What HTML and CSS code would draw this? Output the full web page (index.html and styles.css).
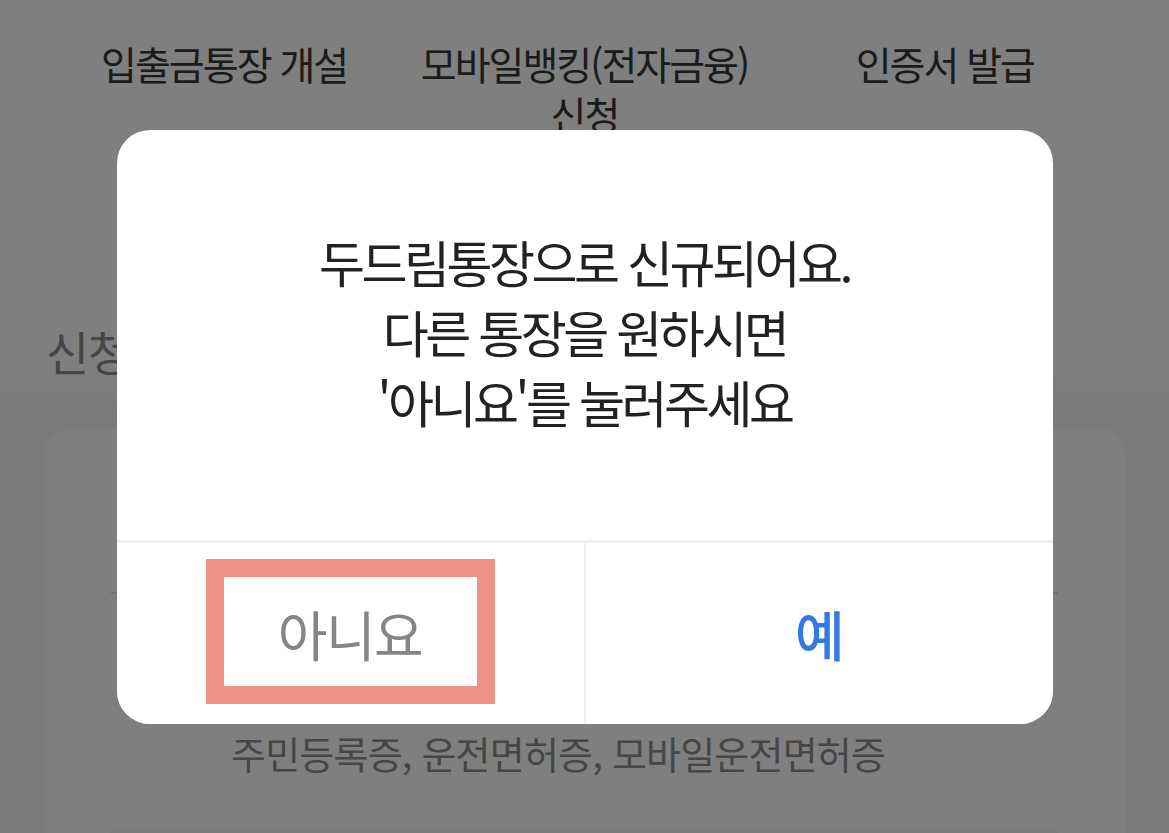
FILE: index.html
```html
<!DOCTYPE html>
<html lang="ko">
<head>
<meta charset="utf-8">
<title>신청</title>
<link rel="stylesheet" href="styles.css">
</head>
<body>
<div class="page">
  <nav class="steps">
    <div class="step">입출금통장 개설</div>
    <div class="step"><span class="step-line">모바일뱅킹(전자금융)</span><span class="step-line">신청</span></div>
    <div class="step">인증서 발급</div>
  </nav>
  <h2 class="section-title">신청정보 확인</h2>
  <div class="content">
    <section class="card">
      <div class="card-head">신분증 확인</div>
      <div class="card-body">
        <p class="card-note">주민등록증, 운전면허증, 모바일운전면허증</p>
        <div class="card-field"></div>
      </div>
    </section>
  </div>
</div>

<div class="overlay">
  <div class="dialog">
    <div class="dialog-msg">
      <p>두드림통장으로 신규되어요.</p>
      <p>다른 통장을 원하시면</p>
      <p>'아니요'를 눌러주세요</p>
    </div>
    <div class="dialog-actions">
      <button class="btn btn-no">아니요<span class="highlight"></span></button>
      <button class="btn btn-yes">예</button>
    </div>
  </div>
</div>
</body>
</html>
```

FILE: styles.css
```css
* { box-sizing: border-box; }
html, body {
  margin: 0;
  padding: 0;
  background: #ffffff;
  font-family: "Noto Sans CJK KR", "Noto Sans", sans-serif;
}
p { margin: 0; }

.page {
  width: 1169px;
  height: 833px;
  overflow: hidden;
  background: #ffffff;
}

.steps {
  display: grid;
  grid-template-columns: repeat(3, 1fr);
  padding: 38px 44px 0;
}
.step {
  text-align: center;
  font-size: 39px;
  line-height: 50px;
  letter-spacing: -2px;
  color: #363636;
}
.step-line {
  display: block;
  height: 50px;
}

.section-title {
  margin: 185px 0 0 46px;
  font-size: 47px;
  line-height: 56px;
  font-weight: 400;
  letter-spacing: -1.5px;
  color: #8c8c8c;
}

.content {
  background: linear-gradient(#ffffff 0, #f6f6f6 30px);
  padding: 49px 44px 0;
  height: 460px;
}
.card {
  height: 480px;
  background: #ffffff;
  border-radius: 28px;
}
.card-head {
  height: 166px;
  margin: 0 67px;
  border-bottom: 2px solid #e0e0e0;
  color: transparent;
  font-size: 1px;
}
.card-body {
  padding: 135px 67px 0;
}
.card-note {
  padding-left: 120px;
  font-size: 38px;
  line-height: 48px;
  letter-spacing: -0.8px;
  color: #8c8c8c;
}
.card-field {
  margin-top: 52px;
  height: 60px;
  background: #f4f4f4;
}

.overlay {
  position: fixed;
  inset: 0;
  background: rgba(0, 0, 0, 0.5);
  display: flex;
  justify-content: center;
  align-items: flex-start;
  padding-top: 130px;
}
.dialog {
  width: 936px;
  height: 594px;
  background: #ffffff;
  border-radius: 33px;
  overflow: hidden;
  display: flex;
  flex-direction: column;
}
.dialog-msg {
  height: 413px;
  border-bottom: 3px solid #efefef;
  padding-top: 96px;
  text-align: center;
  font-size: 50px;
  line-height: 70px;
  letter-spacing: -3.5px;
  color: #222222;
}
.dialog-actions {
  flex: 1;
  display: flex;
}
.btn {
  position: relative;
  flex: 1;
  border: 0;
  background: #ffffff;
  font-family: inherit;
  font-size: 54px;
  letter-spacing: -1.5px;
  padding: 0;
  cursor: pointer;
}
.btn-no {
  color: #858585;
  border-right: 2px solid #efefef;
}
.btn-yes {
  color: #3479e0;
  font-weight: 500;
}
.highlight {
  position: absolute;
  left: 89px;
  top: 16px;
  width: 289px;
  height: 145px;
  border: 18px solid #ef9286;
  pointer-events: none;
}
```
